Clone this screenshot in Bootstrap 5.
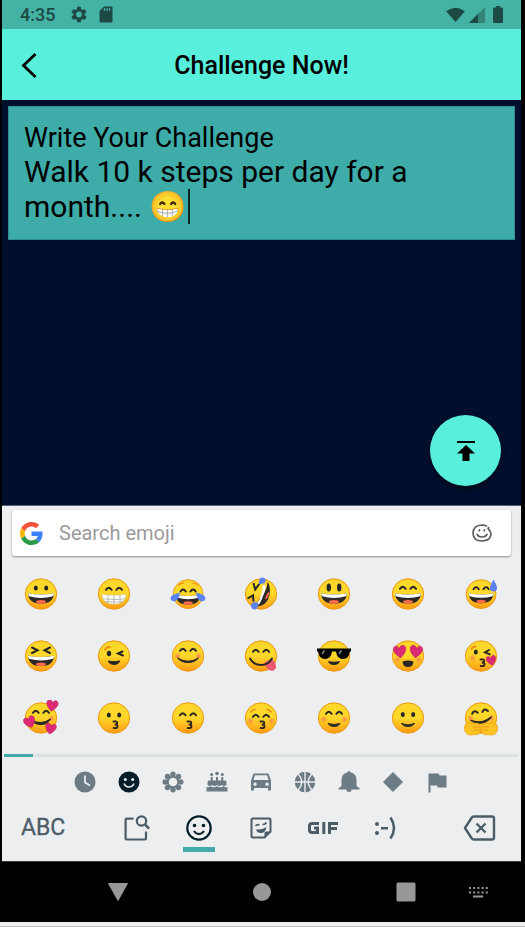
<!DOCTYPE html>
<html lang="en">
<head>
<meta charset="utf-8">
<meta name="viewport" content="width=device-width, initial-scale=1">
<title>Challenge Now!</title>
<link rel="stylesheet" href="https://cdn.jsdelivr.net/npm/bootstrap@5.3.0/dist/css/bootstrap.min.css">
<style>
  body { font-family: Roboto, "Liberation Sans", sans-serif; background: #000; color: #000; }
  svg { display: block; flex: none; }
  button.btn { color: inherit; display: flex; align-items: center; justify-content: center; border: 0; padding: 0; }
  .phone { padding: 0 4px 0 2px; }
  .status { height: 29px; background: #44b2a5; color: #1e4a45; font-size: 18px; font-weight: 500; padding: 0 18px; }
  .status .sd { margin-left: 12px; }
  .appbar { height: 71px; background: #58f0dd; padding-top: 2px; }
  .appbar .back { left: 11px; width: 32px; height: 48px; }
  .appbar h1 { font-size: 25px; font-weight: 500; line-height: 32px; }
  .stage { background: #000f2e; padding: 6px; }
  .composer { background: #3eaca8; border: 1px solid #2f8c93; padding: 15px; }
  .composer label { font-size: 27px; line-height: 32px; }
  .composer textarea { font-size: 30px; line-height: 35px; height: 70px; resize: none; color: #000; outline: 0; overflow: hidden; }
  .caret { left: 164px; bottom: 0; width: 2px; height: 35px; background: #062a2c; }
  button.fab { width: 71px; height: 71px; background: #58f0dd; margin: 0 14px 13px 0; box-shadow: 0 3px 6px rgba(0,0,0,.5); }
  .keyboard { background: #eceef0; border-top: 1px solid #5c5f72; padding: 4px 3px 0 2px; }
  .search { height: 46px; background: #fff; border-radius: 3px; margin: 0 7px 0 8px; padding: 0 19px 0 8px; box-shadow: 0 1px 2px rgba(0,0,0,.4); }
  .search input { font-size: 20px; line-height: 24px; outline: 0; }
  .search input::placeholder { color: #9b9b9b; opacity: 1; }
  .emojis { display: grid; grid-template-columns: repeat(7, 1fr); grid-auto-rows: 62px; padding-top: 7px; }
  .scroll-line { height: 3px; background: #dae1e1; margin-top: 5px; }
  .scroll-line span { width: 29px; height: 3px; background: #44abab; }
  .cats { height: 44px; color: #6c7b84; padding-top: 3px; }
  .cats .btn { width: 44px; height: 44px; }
  .tools { height: 60px; color: #4b5c66; padding: 3px 22px 0 17px; }
  .tools .btn { height: 48px; }
  .tools .tab { width: 62px; }
  .tools .on { color: #041d29; }
  .tools .on i { left: 15px; bottom: 0; width: 32px; height: 5px; background: #44abab; }
  .tools .abc { font-size: 23px; width: 85px; justify-content: start; -webkit-text-stroke: .3px currentColor; }
  .navkeys { display: grid; grid-template-columns: repeat(6, 1fr); height: 61px; color: #989898; border-top: 1px solid #3b3d3f; padding: 0 7px 0 80px; }
  .navkeys .home { grid-column: 3; }
  .navkeys .recents { grid-column: 5; }
  .below { height: 5px; background: #eee; border-bottom: 1px solid #bbb; }
</style>
</head>
<body class="d-flex flex-column min-vh-100">
<svg width="0" height="0" class="position-absolute" aria-hidden="true">
  <defs>
    <linearGradient id="skin" x1="0" y1="0" x2="0" y2="1">
      <stop offset=".5" stop-color="#fdd72a"/><stop offset="1" stop-color="#fd9a12"/>
    </linearGradient>
    <radialGradient id="flush"><stop offset="0" stop-color="#f98159"/><stop offset="1" stop-color="#fba52a" stop-opacity="0"/></radialGradient>
    <ellipse id="face" cx="18" cy="18" rx="15.700" ry="15.200" fill="url(#skin)" stroke="#ec9812"/>
    <g id="dots" fill="#262626"><ellipse cx="12.800" cy="12" rx="2" ry="2.600"/><ellipse cx="23.200" cy="12" rx="2" ry="2.600"/></g>
    <path id="smiles" d="M10 13.800q2.800-4.200 5.600 0M20.400 13.800q2.800-4.200 5.600 0" fill="none" stroke="#262626" stroke-width="2" stroke-linecap="round"/>
    <g id="laugh">
      <path d="M5 17.200q13 2.600 26 0Q30.400 27.600 18 27.600T5 17.200z" fill="#2b2826"/>
      <path d="M5 17.200q13 2.600 26 0q0 2-1 3q-12 3.400-24 0q-1-1-1-3z" fill="#fff"/>
      <ellipse cx="18" cy="25.800" rx="5" ry="1.900" fill="#fb6a4d"/>
    </g>
    <g id="teeth"><path d="M6 19.500q0-1 1.200-.9q10.800 1.200 21.600 0q1.200-.1 1.200.9q-.8 8.700-12 8.700t-12-8.700z" fill="#fff" stroke="#c8b78c" stroke-width=".5"/><path d="M7 22.800q11 1.600 22 0M9 25.600q9 1.200 18 0M12 19v8M18 19.500v8.500M24 19v8" fill="none" stroke="#a9a9a4" stroke-width=".8"/></g>
    <g id="cheeks" fill="url(#flush)"><circle cx="7.500" cy="19.500" r="4.200"/><circle cx="28.500" cy="19.500" r="4.200"/></g>
    <path id="kiss" d="M17.500 21.500q3.800-.6 3.800 1.400q0 1.500-2.500 1.600q3 .1 2.700 2q-.3 2-3.800 1.500" fill="none" stroke="#2b2420" stroke-width="1.800" stroke-linecap="round"/>
    <path id="heart" d="M0 5C-8-1-5.500-6-2.500-5.500Q-.5-5 0-3Q.5-5 2.500-5.500C5.500-6 8-1 0 5z" fill="#dc2a76" stroke="#bd1f63" stroke-width=".5"/>
  </defs>
</svg>

<div class="phone d-flex flex-column flex-grow-1">
  <header>
    <div class="status d-flex align-items-center">
      <span>4:35</span>
      <svg class="ms-3" width="16" height="17" viewBox="2 2 20 20" fill="currentColor"><path d="M19.140 12.940c.04-.3.060-.61.060-.94s-.02-.64-.07-.94l2.030-1.580a.5.500 0 0 0 .12-.61l-1.920-3.320a.5.500 0 0 0-.59-.22l-2.390.96a7 7 0 0 0-1.620-.94l-.36-2.540A.48.480 0 0 0 13.920 2.400h-3.840a.48.480 0 0 0-.47.410l-.36 2.540c-.59.240-1.130.570-1.620.94l-2.390-.96a.5.500 0 0 0-.59.220L2.740 8.870a.48.480 0 0 0 .12.610l2.030 1.580a7 7 0 0 0 0 1.880l-2.030 1.580a.5.500 0 0 0-.12.610l1.920 3.320c.12.220.37.290.59.220l2.390-.96c.5.380 1.030.7 1.620.94l.36 2.540c.05.240.24.410.47.410h3.840c.24 0 .44-.17.470-.41l.36-2.540a7 7 0 0 0 1.620-.94l2.390.96c.22.080.47 0 .59-.22l1.920-3.320a.48.480 0 0 0-.12-.61zM12 15.600a3.600 3.600 0 1 1 0-7.200 3.600 3.600 0 0 1 0 7.200z"/></svg>
      <svg class="sd" width="14" height="17" viewBox="0 0 14 17"><path d="M5 .5h7.500q1 0 1 1v14q0 1-1 1H1.500q-1 0-1-1V5z" fill="currentColor"/><path d="M5.500 2v3M8 2v3M10.500 2v3" stroke="#44b2a5" stroke-width="1.200"/></svg>
      <svg class="ms-auto" width="19" height="16" viewBox="0 0 20 17"><path d="M0 4.500Q10-3 20 4.500L10 16z" fill="currentColor"/></svg>
      <svg class="ms-1" width="16" height="16" viewBox="0 0 16 16" fill="currentColor"><path d="M0 16L16 0v16z" opacity=".45"/><path d="M0 16l9-9v9z"/></svg>
      <svg class="ms-2" width="10" height="17" viewBox="1 0 10 17" fill="currentColor"><path d="M4 0h4v1.500h2q1 0 1 1V16q0 1-1 1H2q-1 0-1-1V2.500q0-1 1-1h2z"/></svg>
    </div>
    <div class="appbar d-flex align-items-center justify-content-center position-relative">
      <button type="button" class="back btn position-absolute" aria-label="Back"><svg width="24" height="26" viewBox="0 0 24 26" fill="none" stroke="#000" stroke-width="2.800"><path d="M18.500 1L6.500 12.500l12 11.500"/></svg></button>
      <h1 class="m-0">Challenge Now!</h1>
    </div>
  </header>

  <main class="stage flex-grow-1 d-flex flex-column">
    <form class="composer">
      <label for="challenge" class="d-block">Write Your Challenge</label>
      <div class="position-relative">
        <textarea id="challenge" class="d-block w-100 border-0 bg-transparent p-0">Walk 10 k steps per day for a month.... 😁</textarea>
        <span class="caret position-absolute"></span>
      </div>
    </form>
    <button type="button" class="fab btn rounded-circle mt-auto ms-auto" aria-label="Publish"><svg width="18" height="20" viewBox="0 0 18 20"><path d="M0 0h18v2H0zM9 4l9 8.500h-5.500V20h-7v-7.500H0z"/></svg></button>
  </main>

  <section class="keyboard" aria-label="Emoji keyboard">
    <div class="search d-flex align-items-center">
      <svg width="23" height="23" viewBox="0 0 48 48"><path fill="#f4533a" d="M24 9.500c3.540 0 6.710 1.220 9.210 3.600l6.850-6.850C35.900 2.380 30.470 0 24 0 14.620 0 6.510 5.380 2.560 13.220l7.980 6.190C12.430 13.720 17.740 9.500 24 9.500z"/><path fill="#3f82f8" d="M46.980 24.550c0-1.570-.15-3.090-.38-4.550H24v9.020h12.940c-.58 2.960-2.260 5.480-4.780 7.180l7.730 6c4.510-4.180 7.090-10.360 7.090-17.650z"/><path fill="#fbb606" d="M10.530 28.590A14.500 14.500 0 0 1 9.770 24c0-1.600.27-3.140.76-4.590l-7.980-6.190A23.900 23.900 0 0 0 0 24c0 3.880.92 7.540 2.560 10.780z"/><path fill="#2b9b4b" d="M24 48c6.480 0 11.930-2.130 15.890-5.810l-7.730-6c-2.150 1.450-4.920 2.300-8.160 2.300-6.260 0-11.570-4.220-13.470-9.910l-7.980 6.190C6.510 42.620 14.620 48 24 48z"/></svg>
      <input type="text" class="border-0 bg-transparent flex-grow-1 p-0 ms-3" placeholder="Search emoji" aria-label="Search emoji">
      <svg width="20" height="18" viewBox="0 0 20 18" fill="none" stroke="#5d5d5d" stroke-width="1.700" stroke-linecap="round"><path d="M14.500 2.100Q12.500 1 10 1Q1 1.300 1 9.500Q1.500 17 10 17Q18.800 16.500 19 10Q19 7.600 17.200 6Q15.500 4.700 16.600 3.600M5 10.300Q6 13 10 13T15 10.300M7.400 5.800v1M12.400 5.800v1"/></svg>
    </div>

    <div class="emojis">
      <button type="button" class="btn" aria-label="Grinning"><svg width="36" height="36" viewBox="0 0 36 36"><use href="#face"/><use href="#dots"/><use href="#laugh"/></svg></button>
      <button type="button" class="btn" aria-label="Beaming"><svg width="36" height="36" viewBox="0 0 36 36"><use href="#face"/><use href="#smiles"/><use href="#teeth"/></svg></button>
      <button type="button" class="btn" aria-label="Tears of joy"><svg width="36" height="36" viewBox="0 0 36 36"><g transform="translate(1 1) scale(.95)"><use href="#face"/><use href="#smiles" y="1.500"/><use href="#laugh" y="1.500"/><path d="M8 8.500q2-2.300 5-2M23 6.500q3-.3 5 2" fill="none" stroke="#ef9117" stroke-width="1.300" stroke-linecap="round"/></g><path d="M10 16.500Q.5 18.500.5 22.500Q1 25.500 4.500 25.200Q9 24.500 10 16.500zM26 16.500q9.500 2 9.500 6q-.5 3-4 2.700q-4.500-.7-5.500-8.700z" fill="#5b83f6"/></svg></button>
      <button type="button" class="btn" aria-label="Rolling on the floor laughing"><svg width="36" height="36" viewBox="0 0 36 36"><use href="#face"/><path d="M24.500 6q-.5 8-5 12.500T15 30.500Q24 29.500 26.500 19q1.500-9-2-13z" fill="#2b2826"/><path d="M21 6.500q1.500 7-2.500 12.500T14.500 30q-3-.5-2.500-2Q18.500 21 19 15.500z" fill="#ef9a14" opacity=".5"/><path d="M19.500 9h3Q23 14 20 20q-2 6-4 8.500h-2.500Q17 24 18 19q2-5 1.500-10z" fill="#fff"/><path d="M26.500 15.500q-3.500 2-4.500 8 4-1.500 4.500-8z" fill="#fb6a4d"/><path d="M10.500 7l1.700 6.500 4-5.500M4.500 22.500l5.500-3.200.5 6.200" fill="none" stroke="#262626" stroke-width="2"/><path d="M16 8q-.8-5.500 3-6.500 3.500 0 3.800 3.300Q22 8.500 16 8zM15 26.500q-6.500-1.500-7 3 .2 4 3.700 4 4-.5 3.300-7z" fill="#5b83f6"/></svg></button>
      <button type="button" class="btn" aria-label="Grinning, big eyes"><svg width="36" height="36" viewBox="0 0 36 36"><use href="#face"/><ellipse cx="12.800" cy="11.500" rx="2.200" ry="4" fill="#262626"/><ellipse cx="23.200" cy="11.500" rx="2.200" ry="4" fill="#262626"/><use href="#laugh"/></svg></button>
      <button type="button" class="btn" aria-label="Grinning, smiling eyes"><svg width="36" height="36" viewBox="0 0 36 36"><use href="#face"/><use href="#smiles" y="-1"/><use href="#laugh"/></svg></button>
      <button type="button" class="btn" aria-label="Grinning with sweat"><svg width="36" height="36" viewBox="0 0 36 36"><g transform="translate(1 1) scale(.95)"><use href="#face"/><use href="#smiles" y="-1"/><use href="#laugh"/></g><path d="M30.500 3.500q3.500 6 3.500 8.500a3.500 3.500 0 0 1-7 0q0-2.500 3.500-8.500z" fill="#5b83f6"/></svg></button>

      <button type="button" class="btn" aria-label="Squinting"><svg width="36" height="36" viewBox="0 0 36 36"><use href="#face"/><path d="M9 9.500l5.500 2.800L9 15M27 9.500l-5.500 2.800L27 15" fill="none" stroke="#262626" stroke-width="2" stroke-linecap="round"/><use href="#laugh" y=".5"/></svg></button>
      <button type="button" class="btn" aria-label="Winking"><svg width="36" height="36" viewBox="0 0 36 36"><use href="#face"/><ellipse cx="13" cy="15.500" rx="2.200" ry="2.700" fill="#262626"/><path d="M26.500 13.500l-4.500 2 5 2" fill="none" stroke="#262626" stroke-width="2" stroke-linecap="round"/><path d="M12 23q6 1.500 12 0-1.500 3.500-6 3.500T12 23z" fill="#262626" stroke="#262626" stroke-linejoin="round"/><path d="M9 12q1-3 4.500-3" fill="none" stroke="#f08a15" stroke-width="1.800" stroke-linecap="round"/></svg></button>
      <button type="button" class="btn" aria-label="Smiling, smiling eyes"><svg width="36" height="36" viewBox="0 0 36 36"><use href="#face"/><use href="#cheeks" y="-1.500"/><use href="#smiles" y="-1"/><path d="M7.500 20Q18 26.500 28.500 20q-4 4.500-10.500 4.500T7.500 20z" fill="#262626" stroke="#262626" stroke-linejoin="round"/></svg></button>
      <button type="button" class="btn" aria-label="Savoring food"><svg width="36" height="36" viewBox="0 0 36 36"><use href="#face"/><use href="#smiles"/><path d="M21 25l7.500-4.500q5 4.500 4.500 9-2 5-7 2.500-3-2-5-7z" fill="#e95a70"/><path d="M7 20.500q3.500 6.500 11 6.500t11-6.500" fill="none" stroke="#262626" stroke-width="1.800" stroke-linecap="round"/></svg></button>
      <button type="button" class="btn" aria-label="Sunglasses"><svg width="36" height="36" viewBox="0 0 36 36"><use href="#face"/><path d="M1 10.500h34v2.500l-1.500 1.500q-.5 6.500-6.500 6.500t-7-7.500h-4Q15 21 9 21t-6.500-6.500L1 13z" fill="#000"/><path d="M6 16l2.500-3.500M23 16l2.500-3.500" stroke="#888" stroke-width="1.500"/><path d="M12 23q6 1.500 12 0-1 4-6 4t-6-4z" fill="#262626"/></svg></button>
      <button type="button" class="btn" aria-label="Heart eyes"><svg width="36" height="36" viewBox="0 0 36 36"><use href="#face"/><use href="#cheeks" y="2"/><use href="#heart" transform="translate(10 14) rotate(-8) scale(1.150)"/><use href="#heart" transform="translate(26 14) rotate(8) scale(1.150)"/><path d="M12.500 23.500Q18 21.500 23.500 23.500Q23 29 18 29T12.500 23.500z" fill="#262626"/></svg></button>
      <button type="button" class="btn" aria-label="Blowing a kiss"><svg width="36" height="36" viewBox="0 0 36 36"><use href="#face"/><circle cx="9.500" cy="20" r="4.200" fill="url(#flush)"/><ellipse cx="12.800" cy="14" rx="2" ry="2.600" fill="#262626"/><path d="M26 12l-4 2.300 4.800 2" fill="none" stroke="#262626" stroke-width="2" stroke-linecap="round"/><path d="M8.500 11q1-2.500 4-2.500" fill="none" stroke="#f08a15" stroke-width="1.800" stroke-linecap="round"/><use href="#kiss"/><use href="#heart" transform="translate(28.500 22.800) rotate(-14) scale(.9)"/></svg></button>

      <button type="button" class="btn" aria-label="Smiling with hearts"><svg width="36" height="36" viewBox="0 0 36 36"><use href="#face"/><use href="#cheeks" y="-1"/><use href="#smiles" y="-1"/><path d="M8.500 20q9.500 5.500 19-1-3 5.500-9.500 5.500T8.500 20z" fill="#262626" stroke="#262626" stroke-linejoin="round"/><use href="#heart" transform="translate(29 6) rotate(10) scale(1.050)"/><use href="#heart" transform="translate(7 22.500) rotate(-22) scale(1.050)"/><use href="#heart" transform="translate(27.500 29) rotate(12)"/></svg></button>
      <button type="button" class="btn" aria-label="Kissing"><svg width="36" height="36" viewBox="0 0 36 36"><use href="#face"/><use href="#dots" y="3"/><use href="#kiss"/></svg></button>
      <button type="button" class="btn" aria-label="Kissing, smiling eyes"><svg width="36" height="36" viewBox="0 0 36 36"><use href="#face"/><use href="#smiles" y="1.500"/><use href="#kiss"/></svg></button>
      <button type="button" class="btn" aria-label="Kissing, closed eyes"><svg width="36" height="36" viewBox="0 0 36 36"><use href="#face"/><use href="#cheeks" y="1.500"/><use href="#smiles" y="3"/><path d="M8 12q1.500-2.500 4-2.500M24 9.500q2.500 0 4 2.500" fill="none" stroke="#f08a15" stroke-width="1.500" stroke-linecap="round"/><use href="#kiss"/></svg></button>
      <button type="button" class="btn" aria-label="Smiling, blushing"><svg width="36" height="36" viewBox="0 0 36 36"><use href="#face"/><use href="#cheeks"/><use href="#smiles"/><path d="M12 23.500q6 2 12 0-1.500 3-6 3t-6-3z" fill="#262626" stroke="#262626" stroke-linejoin="round"/></svg></button>
      <button type="button" class="btn" aria-label="Slight smile"><svg width="36" height="36" viewBox="0 0 36 36"><use href="#face"/><use href="#dots" y="2.500"/><path d="M11.500 23.500q6.500 3 13 0-2 3-6.500 3t-6.500-3z" fill="#262626" stroke="#262626" stroke-linejoin="round"/></svg></button>
      <button type="button" class="btn" aria-label="Hugging"><svg width="36" height="36" viewBox="0 0 36 36"><use href="#face"/><use href="#cheeks" y="-1"/><g transform="rotate(-10 18 18)"><use href="#smiles" y="-1.500"/><path d="M7.500 18.500q10.500 6 21 0-4 4.500-10.500 4.500T7.500 18.500z" fill="#262626" stroke="#262626" stroke-linejoin="round"/></g><path d="M1.500 27q.5-3.500 4-4l10 .5q1.500.5.500 2l1 1.500v5l-2 2.500-9 .5q-5-2-4.500-8zM34.500 27q-.5-3.500-4-4l-10 .5q-1.500.5-.5 2l-1 1.500v5l2 2.500 9 .5q5-2 4.500-8z" fill="#fdc323" stroke="#f0a418" stroke-width=".8"/><path d="M10 27h6M11 30h5M20 27h6M20 30h5" stroke="#ec9812"/></svg></button>
    </div>

    <div class="scroll-line"><span class="d-block"></span></div>

    <div class="cats d-flex justify-content-center">
      <button type="button" class="btn" aria-label="Recent"><svg width="22" height="22" viewBox="0 0 22 22"><circle cx="11" cy="11" r="10.500" fill="currentColor"/><path d="M11 4.500V11.500l5 3" fill="none" stroke="#eceef0" stroke-width="1.800"/></svg></button>
      <button type="button" class="btn" aria-label="Smileys"><svg width="22" height="22" viewBox="0 0 22 22"><circle cx="11" cy="11" r="10.500" fill="#041d29"/><path d="M6 12.500q1.500 3.500 5 3.500t5-3.500" fill="none" stroke="#eceef0" stroke-width="1.600"/><circle cx="7.300" cy="8.500" r="1.500" fill="#eceef0"/><circle cx="14.700" cy="8.500" r="1.500" fill="#eceef0"/></svg></button>
      <button type="button" class="btn" aria-label="Nature"><svg width="22" height="22" viewBox="0 0 22 22" fill="currentColor"><circle cx="11" cy="3.200" r="2.700"/><circle cx="11" cy="18.800" r="2.700"/><circle cx="3.200" cy="11" r="2.700"/><circle cx="18.800" cy="11" r="2.700"/><circle cx="5.500" cy="5.500" r="2.700"/><circle cx="16.500" cy="5.500" r="2.700"/><circle cx="5.500" cy="16.500" r="2.700"/><circle cx="16.500" cy="16.500" r="2.700"/><circle cx="11" cy="11" r="5.300" fill="none" stroke="currentColor" stroke-width="2"/></svg></button>
      <button type="button" class="btn" aria-label="Food"><svg width="22" height="22" viewBox="0 0 22 22" fill="currentColor"><path d="M4.700 6h2v3.500H10V6h2v3.500h3.300V6h2v3.500h1.700q1.500 0 1.500 1.500v3q-2.300 1.800-4.700 0-2.300 1.800-4.800 0-2.500 1.800-4.800 0-2.400 1.800-4.700 0v-3q0-1.500 1.500-1.500h1.700zM.5 20.500V16q2 1 4-.8 3 2 6.500 0 3.500 2 6.500 0 2 1.800 4 .8v4.500z"/><circle cx="5.700" cy="3.500" r="1.500"/><circle cx="11" cy="2.500" r="1.800"/><circle cx="16.300" cy="3.500" r="1.500"/></svg></button>
      <button type="button" class="btn" aria-label="Travel"><svg width="22" height="22" viewBox="0 0 22 22"><path fill-rule="evenodd" fill="currentColor" d="M3.500 2.500h15l2.500 7v10h-3v-2.500H4v2.500H1v-10zM5 4.300L3.400 9h15.200L17 4.300zM5 11.500a1.700 1.700 0 1 0 .1 0zM17 11.500a1.700 1.700 0 1 0 .1 0z"/></svg></button>
      <button type="button" class="btn" aria-label="Activities"><svg width="22" height="22" viewBox="0 0 22 22"><circle cx="11" cy="11" r="10.300" fill="currentColor"/><path d="M11 0v22M0 11h22M3.500 2.500q8.500 8.500 0 17M18.500 2.500q-8.500 8.500 0 17" fill="none" stroke="#eceef0" stroke-width="1.400"/></svg></button>
      <button type="button" class="btn" aria-label="Objects"><svg width="22" height="22" viewBox="0 0 22 22" fill="currentColor"><path d="M9.500 1.500a1.500 1.500 0 0 1 3 0Q18.500 2.500 18.500 9v5.500q.5 1.500 3 2.500v1.500H13.500a2.500 2.500 0 0 1-5 0H.5V17q2.500-1 3-2.500V9q0-6.500 6-7.500z"/></svg></button>
      <button type="button" class="btn" aria-label="Symbols"><svg width="22" height="22" viewBox="0 0 22 22" fill="currentColor" stroke="currentColor" stroke-linejoin="round"><path d="M11 1.500L20.500 11 11 20.500 1.500 11z"/></svg></button>
      <button type="button" class="btn" aria-label="Flags"><svg width="22" height="22" viewBox="0 0 22 22" fill="currentColor"><path d="M2.500 2.500h10l1 2h7v12h-8.500l-1-2H4.500V21.500h-2z"/></svg></button>
    </div>

    <div class="tools d-flex">
      <button type="button" class="abc btn">ABC</button>
      <button type="button" class="tab btn" aria-label="Search"><svg width="26" height="26" viewBox="0 0 26 26" fill="none" stroke="currentColor" stroke-width="2.200"><path d="M9.500 3.600H2.600q-1 0-1 1V23.500q0 1 1 1H21q1 0 1-1v-7"/><circle cx="17.500" cy="6" r="4.700"/><path d="M20.800 9.300l4.200 4.200" stroke-width="2.600"/></svg></button>
      <button type="button" class="tab on btn position-relative" aria-label="Emoji"><svg width="26" height="26" viewBox="0 0 26 26"><circle cx="13" cy="13" r="11.700" fill="none" stroke="currentColor" stroke-width="2.200"/><circle cx="8.500" cy="10.500" r="1.800" fill="currentColor"/><circle cx="17.500" cy="10.500" r="1.800" fill="currentColor"/><path d="M8 16q2 3 5 3t5-3" fill="none" stroke="currentColor" stroke-width="2"/></svg><i class="position-absolute"></i></button>
      <button type="button" class="tab btn" aria-label="Stickers"><svg width="22" height="22" viewBox="0 0 22 22" fill="none" stroke="currentColor" stroke-width="2"><path d="M3 1.500h16q1.500 0 1.500 1.500v11.500l-6 6H3Q1.500 20.500 1.500 19V3Q1.500 1.500 3 1.500z"/><path d="M14.500 20.500v-4.500q0-1.500 1.500-1.500h4.500z" fill="currentColor" stroke="none"/><path d="M5.500 9q1.500-2 4-1M12.500 7.500q3 0 4-2" stroke-width="1.700"/><path d="M6 12.500q6 .5 10.500-2.500-1 6-5.500 6-4 0-5-3.500z" fill="currentColor" stroke="none"/></svg></button>
      <button type="button" class="tab btn" aria-label="GIF"><svg width="30" height="14" viewBox="0 0 30 14" fill="none" stroke="currentColor" stroke-width="3"><path d="M11 2.500H4Q1.500 2.500 1.500 5v4q0 2.500 2.500 2.500h5.500V7H6M15.800 1v12M21.500 13V2.500h8.500M22 7.500h7"/></svg></button>
      <button type="button" class="tab btn" aria-label="Emoticons"><svg width="22" height="24" viewBox="0 0 22 24" fill="none" stroke="currentColor" stroke-width="2.500"><circle cx="3" cy="8" r="2" fill="currentColor" stroke="none"/><circle cx="3" cy="17" r="2" fill="currentColor" stroke="none"/><path d="M7 12.300h7M16.500 1.500q7 10.500 0 21"/></svg></button>
      <button type="button" class="btn ms-auto" aria-label="Delete"><svg width="33" height="26" viewBox="0 0 33 26" fill="none" stroke="currentColor" stroke-width="2.400" stroke-linejoin="round"><path d="M10.500 1.500H29q2 0 2 2v19q0 2-2 2H10.500Q9.500 24.500 8.500 23L2 13l6.500-10Q9.500 1.500 10.500 1.500zM13.500 8.500l9 9M22.500 8.500l-9 9"/></svg></button>
    </div>
  </section>

  <nav class="navkeys" aria-label="System navigation">
    <button type="button" class="btn" aria-label="Hide keyboard"><svg width="22" height="20" viewBox="0 0 22 20" fill="currentColor" stroke="currentColor" stroke-linejoin="round"><path d="M1.500 1.500h19L11 18.500z"/></svg></button>
    <button type="button" class="home btn" aria-label="Home"><svg width="18" height="18" viewBox="0 0 18 18" fill="currentColor"><circle cx="9" cy="9" r="9"/></svg></button>
    <button type="button" class="recents btn" aria-label="Recent apps"><svg width="20" height="20" viewBox="0 0 20 20" fill="currentColor"><rect x=".5" y=".5" width="19" height="19" rx="1.500"/></svg></button>
    <button type="button" class="btn" aria-label="Switch keyboard"><svg width="20" height="12" viewBox="0 0 20 12" stroke="currentColor" stroke-width="2"><path d="M1 2h19M1 6.500h19" stroke-dasharray="2 2.200"/><path d="M5 10.500h10"/></svg></button>
  </nav>
</div>
<div class="below"></div>
</body>
</html>
